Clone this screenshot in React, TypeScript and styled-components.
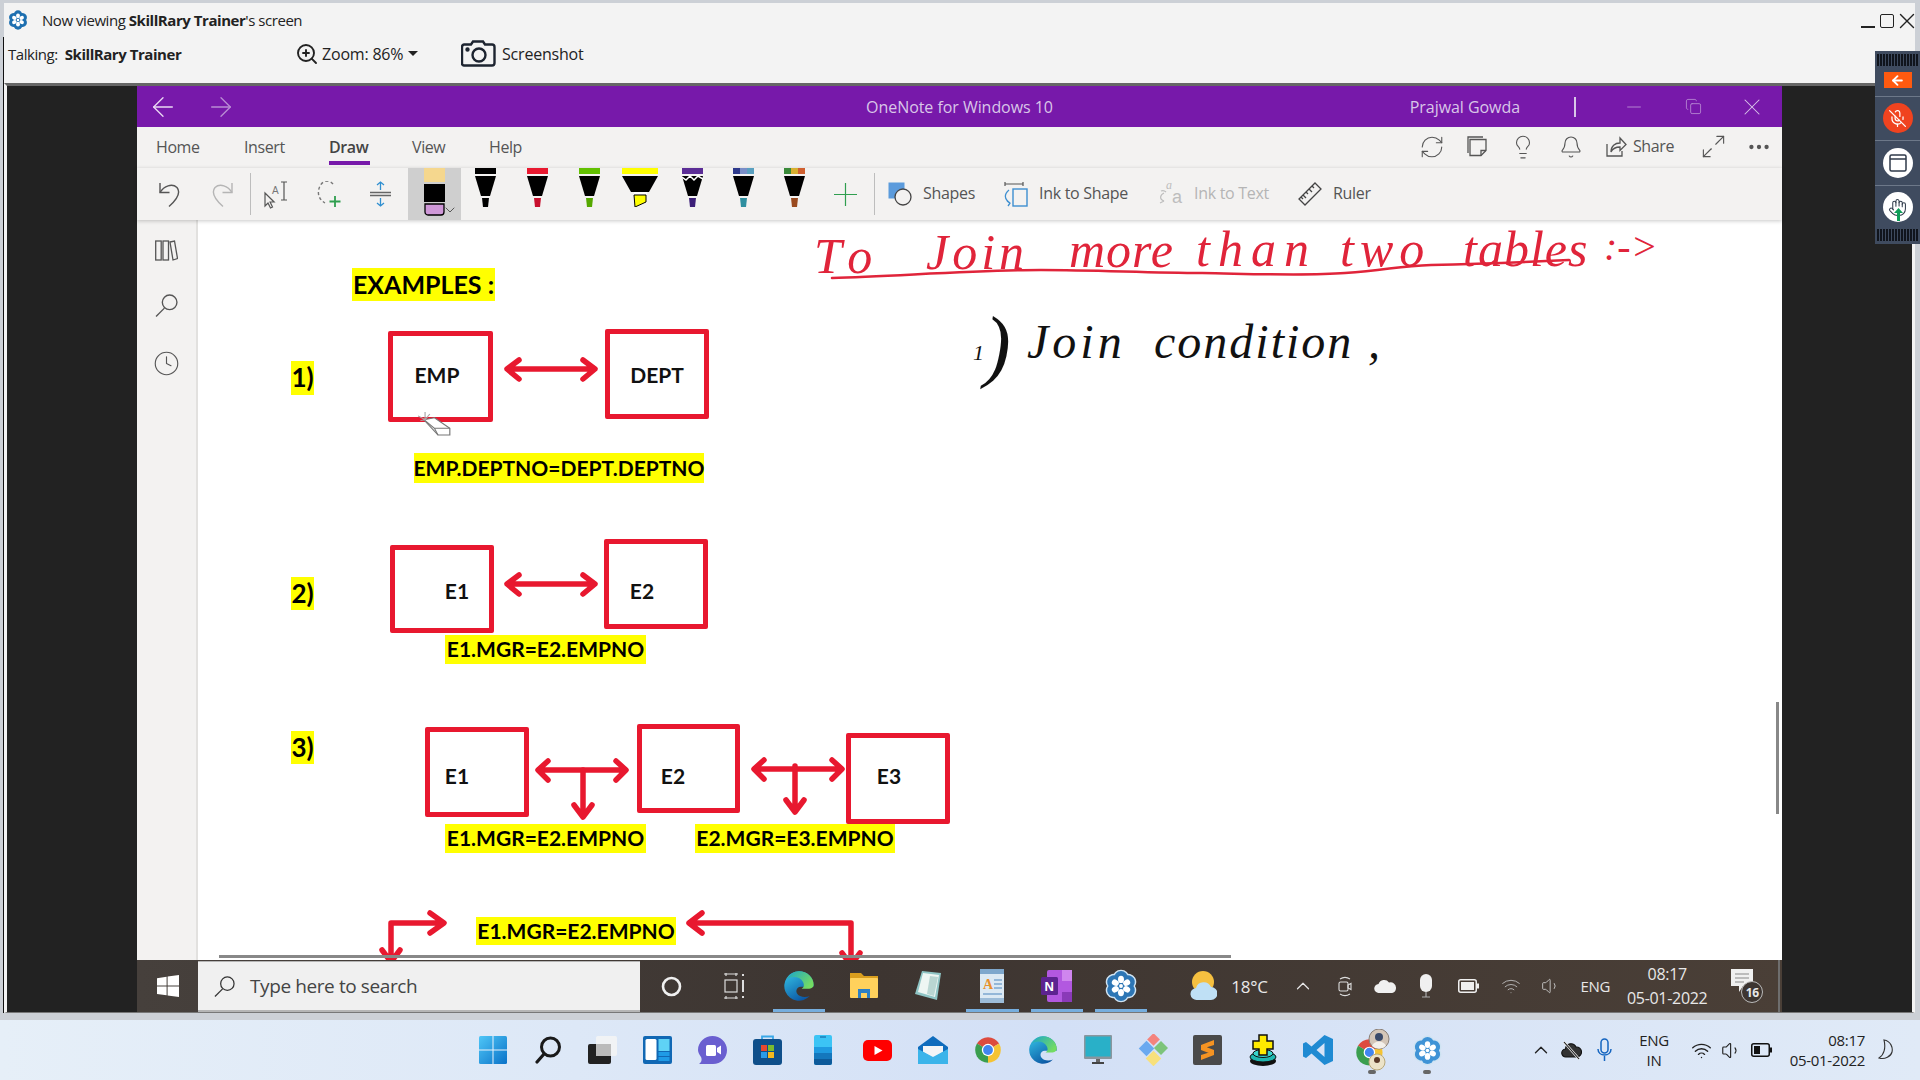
import styled, { createGlobalStyle } from "styled-components";
import {
  ArrowLeft, ArrowRight, Bell, ChevronDown, ChevronUp, Clock, Copy, Hand, Lightbulb,
  Maximize2, MicOff, Minus, MoreHorizontal, RefreshCw, Volume1, Wifi, X, ZoomIn,
} from "lucide-react";

const UI = `"Open Sans", "Noto Sans", sans-serif`;

const GlobalStyle = createGlobalStyle`
  html, body { margin: 0; padding: 0; width: 1920px; height: 1080px; overflow: hidden; }
  * { box-sizing: border-box; }
  body { font-family: ${UI}; }
`;

const Page = styled.div`
  position: relative;
  width: 1920px;
  height: 1080px;
  display: flex;
  flex-direction: column;
`;

const ShareFrame = styled.div`
  height: 1020px;
  background: #ccd0d6;
  padding: 3px 5px 0 4px;
  display: flex;
  flex-direction: column;
`;

const ViewerHeader = styled.header`
  height: 80px;
  flex: none;
  background: #f3f3f3;
  color: #222;
`;

const ViewerTitle = styled.div`
  height: 34px;
  display: flex;
  align-items: center;
  padding-left: 7px;
  gap: 13px;
  font-size: 15px;
  letter-spacing: -0.45px;
  margin-left: -4px;
  position: relative;
`;

const WindowButtons = styled.div`
  position: absolute;
  right: -5px;
  top: 5px;
  display: flex;
  align-items: center;
  color: #222;
`;

const MinBar = styled.div`
  width: 14px;
  height: 2px;
  background: #222;
  margin: 11px 5px 0 0;
`;

const MaxBox = styled.div`
  width: 14px;
  height: 14px;
  border: 1.5px solid #222;
  border-radius: 2px;
`;

const ViewerTools = styled.div`
  height: 46px;
  display: flex;
  align-items: center;
  box-shadow: -1px 0 0 #111;
  padding-left: 4px;
  padding-bottom: 13px;
`;

const Talking = styled.div`
  width: 287px;
  font-size: 15px;
  letter-spacing: -0.45px;
  b { margin-left: 7px; }
`;

const ZoomControl = styled.div`
  display: flex;
  align-items: center;
  gap: 3px;
  font-size: 16px;
  letter-spacing: -0.2px;
  width: 166px;
`;

const Caret = styled.span`
  width: 0;
  height: 0;
  border-left: 5px solid transparent;
  border-right: 5px solid transparent;
  border-top: 5px solid #222;
  margin-left: 2px;
`;

const ShotButton = styled.div`
  display: flex;
  align-items: center;
  gap: 6px;
  font-size: 16px;
  letter-spacing: -0.2px;
`;

const Stage = styled.main`
  height: 930px;
  flex: none;
  border-top: 3px solid #666;
  border-left: 3px solid #f3f3f3;
  border-right: 3px solid #f3f3f3;
  border-bottom: 1px solid #777;
  background: #222;
  padding-left: 130px;
  box-shadow: -1px 0 0 #111;
`;

const NoteWindow = styled.div`
  width: 1645px;
  height: 926px;
  display: flex;
  flex-direction: column;
`;

const TitleBar = styled.div`
  height: 41px;
  flex: none;
  background: #7719aa;
  color: #d9c6e8;
  display: grid;
  grid-template-columns: 1fr auto 1fr;
  align-items: center;
  font-size: 16px;
  letter-spacing: -0.05px;
`;

const NavArrows = styled.div`
  display: flex;
  align-items: center;
  gap: 26px;
  padding-left: 10px;
`;

const TitleRight = styled.div`
  display: flex;
  align-items: center;
  justify-content: flex-end;
  padding-right: 16px;
`;

const UserName = styled.span`
  margin-right: 54px;
`;

const TitleDivider = styled.span`
  width: 2px;
  height: 20px;
  background: #d9c6e8;
  margin-right: 47px;
`;

const TitleGlyph = styled.span<{ $ml?: number }>`
  display: flex;
  margin-left: ${(p) => p.$ml ?? 0}px;
`;

const TabRow = styled.div`
  height: 41px;
  flex: none;
  background: #f3f2f1;
  display: flex;
  align-items: center;
  padding: 0 13px 2px 19px;
  color: #555;
  font-size: 16px;
  letter-spacing: -0.4px;
`;

const Tab = styled.div<{ $w: number; $active?: boolean }>`
  position: relative;
  width: ${(p) => p.$w}px;
  font-weight: ${(p) => (p.$active ? 600 : 400)};
  color: ${(p) => (p.$active ? "#444" : "#555")};
  &::after {
    content: "";
    display: ${(p) => (p.$active ? "block" : "none")};
    position: absolute;
    left: 0;
    top: 25px;
    width: 41px;
    height: 4px;
    background: #7719aa;
  }
`;

const ToolRow = styled.div`
  height: 52px;
  flex: none;
  background: #f3f2f1;
  display: flex;
  align-items: center;
  color: #555;
  font-size: 16px;
  letter-spacing: -0.3px;
  position: relative;
  z-index: 2;
  box-shadow: 0 1px 4px rgba(0, 0, 0, 0.22);
`;

const ToolSlot = styled.div<{ $ml?: number; $w: number; $auto?: boolean; $top?: boolean }>`
  margin-left: ${(p) => (p.$auto ? "auto" : `${p.$ml ?? 0}px`)};
  width: ${(p) => p.$w}px;
  flex: none;
  display: flex;
  justify-content: center;
  align-self: ${(p) => (p.$top ? "flex-start" : "center")};
  svg { flex: none; }
`;

const ToolLabel = styled.span<{ $ml: number; $w: number; $off?: boolean }>`
  margin-left: ${(p) => p.$ml}px;
  width: ${(p) => p.$w}px;
  flex: none;
  white-space: nowrap;
  padding-bottom: 2px;
  color: ${(p) => (p.$off ? "#b5b5b5" : "#555")};
`;

const ToolDivider = styled.span<{ $ml: number }>`
  margin-left: ${(p) => p.$ml}px;
  width: 1px;
  height: 42px;
  background: #bdbdbd;
  flex: none;
`;

const ActivePen = styled.div`
  margin-left: 17px;
  width: 53px;
  height: 52px;
  flex: none;
  background: #cfcfcf;
  position: relative;
  padding-left: 16px;
`;

const ActiveChevron = styled.span`
  position: absolute;
  right: 3px;
  bottom: 2px;
  display: flex;
  color: #444;
`;

const NoteBody = styled.div`
  flex: 1;
  display: flex;
  min-height: 0;
`;

const SideRail = styled.nav`
  width: 61px;
  flex: none;
  background: #f3f2f1;
  border-right: 2px solid #e2e1df;
  display: flex;
  flex-direction: column;
  align-items: center;
  gap: 33px;
  padding-top: 20px;
  color: #555;
`;

const Canvas = styled.section`
  flex: 1;
  position: relative;
  overflow: hidden;
  background: #fff;
`;

const Highlight = styled.div<{ $x: number; $y: number; $w: number; $h: number; $size?: number }>`
  position: absolute;
  left: ${(p) => p.$x}px;
  top: ${(p) => p.$y}px;
  width: ${(p) => p.$w}px;
  height: ${(p) => p.$h}px;
  padding-bottom: 2px;
  background: #ffff00;
  color: #000;
  display: flex;
  align-items: center;
  justify-content: center;
  font: 700 ${(p) => p.$size ?? 21}px Lato, sans-serif;
  white-space: nowrap;
`;

const TableBox = styled.div<{ $x: number; $y: number; $w: number; $h: number }>`
  position: absolute;
  left: ${(p) => p.$x}px;
  top: ${(p) => p.$y}px;
  width: ${(p) => p.$w}px;
  height: ${(p) => p.$h}px;
  border: 5px solid #e8182f;
  border-radius: 2px;
`;

const TableName = styled.span<{ $cx: number; $cy: number }>`
  position: absolute;
  left: ${(p) => p.$cx}px;
  top: ${(p) => p.$cy}px;
  transform: translate(-50%, -50%);
  font: 700 21px Lato, sans-serif;
  color: #111;
`;

const DrawingLayer = styled.svg`
  position: absolute;
  left: 0;
  top: 0;
`;

const EraserCursor = styled.svg`
  position: absolute;
  left: 220px;
  top: 192px;
`;

const InkWord = styled.span<{ $x: number; $y: number; $ink: string; $size: number; $track?: number }>`
  position: absolute;
  left: ${(p) => p.$x}px;
  top: ${(p) => p.$y}px;
  line-height: 1;
  white-space: nowrap;
  color: ${(p) => p.$ink};
  font: italic 400 ${(p) => p.$size}px "Liberation Serif", serif;
  letter-spacing: ${(p) => p.$track ?? 0}px;
`;

const HScrollbar = styled.div`
  position: absolute;
  left: 21px;
  bottom: 2px;
  width: 1012px;
  height: 3px;
  background: #888;
`;

const VScrollbar = styled.div`
  position: absolute;
  right: 3px;
  top: 482px;
  width: 3px;
  height: 112px;
  background: #888;
`;

const InnerTaskbar = styled.div`
  height: 52px;
  flex: none;
  background: linear-gradient(90deg, #46403c 0%, #3d3531 45%, #4a3f37 100%);
  display: flex;
  align-items: center;
  color: #e8e8e8;
  font-size: 15px;
  letter-spacing: -0.3px;
`;

const WinSlot = styled.div`
  width: 61px;
  display: flex;
  justify-content: center;
`;

const SearchBox = styled.div`
  width: 442px;
  height: 51px;
  margin-top: 1px;
  background: #f0f0f0;
  border-top: 1px solid #b5b5b5;
  border-bottom: 2px solid #b5b5b5;
  display: flex;
  align-items: center;
  padding-left: 16px;
  gap: 15px;
  color: #444;
  font-size: 19px;
  letter-spacing: -0.4px;
`;

const BarSlot = styled.div<{ $w: number; $active?: boolean }>`
  position: relative;
  width: ${(p) => p.$w}px;
  height: 52px;
  flex: none;
  display: flex;
  align-items: center;
  justify-content: center;
  &::after {
    content: "";
    display: ${(p) => (p.$active ? "block" : "none")};
    position: absolute;
    left: 6px;
    right: 6px;
    bottom: 0;
    height: 3px;
    background: #76aede;
  }
`;

const BarGlyph = styled.span<{ $ml: number; $fs?: number }>`
  display: flex;
  justify-content: center;
  flex: none;
  margin-left: ${(p) => p.$ml}px;
  font-size: ${(p) => p.$fs ?? 15}px;
  white-space: nowrap;
`;

const BarClock = styled.div`
  margin-left: 17px;
  width: 80px;
  flex: none;
  display: flex;
  flex-direction: column;
  align-items: center;
  gap: 4px;
  line-height: 20px;
  font-size: 16px;
  white-space: nowrap;
`;

const NotifyWrap = styled.div`
  position: relative;
  margin-left: 24px;
  width: 32px;
  height: 34px;
  flex: none;
`;

const NotifyBadge = styled.span`
  position: absolute;
  right: 0;
  bottom: 0;
  width: 22px;
  height: 22px;
  border-radius: 50%;
  background: #3d3531;
  border: 1px solid #bbb;
  display: flex;
  align-items: center;
  justify-content: center;
  font-size: 12px;
  font-weight: 700;
  letter-spacing: -0.5px;
`;

const BarDivider = styled.span`
  margin-left: 15px;
  width: 2px;
  height: 52px;
  background: #6e6e6e;
`;

const DesktopBar = styled.footer`
  height: 60px;
  background: linear-gradient(90deg, #e6eff8 0%, #dde8f7 30%, #d3e0f6 55%, #e0eaf7 100%);
  display: flex;
  align-items: center;
  padding-left: 465px;
  color: #222;
`;

const DockSlot = styled.div<{ $dot?: boolean }>`
  position: relative;
  width: 55px;
  height: 60px;
  flex: none;
  display: flex;
  align-items: center;
  justify-content: center;
  &::after {
    content: "";
    display: ${(p) => (p.$dot ? "block" : "none")};
    position: absolute;
    left: 23px;
    top: 50px;
    width: 8px;
    height: 4px;
    border-radius: 2px;
    background: #666;
  }
`;

const TraySlot = styled.div<{ $w: number; $ml?: number }>`
  width: ${(p) => p.$w}px;
  margin-left: ${(p) => p.$ml ?? 0}px;
  flex: none;
  display: flex;
  flex-direction: column;
  align-items: center;
  font-size: 15px;
  line-height: 20px;
  letter-spacing: -0.3px;
`;

const TrayClock = styled.div`
  width: 89px;
  flex: none;
  text-align: right;
  font-size: 15px;
  line-height: 20px;
  letter-spacing: -0.3px;
  white-space: nowrap;
`;

const FloatBar = styled.aside`
  position: absolute;
  top: 51px;
  right: 0;
  width: 45px;
  height: 193px;
  background: #3f4b5f;
  display: flex;
  flex-direction: column;
  align-items: center;
  padding: 3px 0;
`;

const Grip = styled.div<{ $end?: boolean }>`
  width: 41px;
  height: 12px;
  flex: none;
  margin-top: ${(p) => (p.$end ? "auto" : "0")};
  background: repeating-linear-gradient(90deg, #10141c 0 2px, transparent 2px 3px);
`;

const ExitButton = styled.div`
  margin-top: 6px;
  width: 28px;
  height: 16px;
  background: #ff5a0f;
  display: flex;
  align-items: center;
  justify-content: center;
  color: #fff;
`;

const FloatSep = styled.div<{ $mt: number }>`
  width: 100%;
  height: 1px;
  background: #6d7889;
  margin-top: ${(p) => p.$mt}px;
`;

const RoundButton = styled.div<{ $bg: string; $mt: number; $ink: string }>`
  position: relative;
  margin-top: ${(p) => p.$mt}px;
  width: 30px;
  height: 30px;
  border-radius: 50%;
  background: ${(p) => p.$bg};
  color: ${(p) => p.$ink};
  flex: none;
  display: flex;
  align-items: center;
  justify-content: center;
`;

const RaiseArrow = styled.svg`
  position: absolute;
  left: 11px;
  bottom: 1px;
`;

/* ---------- drawn icons ---------- */

const Pen = ({ bands, tip = "#000", stripe }: { bands: string[]; tip?: string; stripe?: boolean }) => (
  <svg width="21" height="39" viewBox="0 0 21 39">
    {bands.map((c, i) => (
      <rect key={c} x={(21 / bands.length) * i} y="0" width={21 / bands.length + 0.3} height="6" fill={c} />
    ))}
    <polygon points="0,8 21,8 15,28 6,28" fill="#000" />
    {stripe && <polyline points="0,9 4,12 8,8 12,12 16,8 21,11" fill="none" stroke="#fff" strokeWidth="1.5" />}
    <polygon points="7,30 14,30 13,39 8,39" fill={tip} />
  </svg>
);

const Highlighter = () => (
  <svg width="36" height="39" viewBox="0 0 36 39">
    <rect x="0" y="0" width="36" height="6" fill="#ffff00" />
    <polygon points="0,8 36,8 27,24 9,24" fill="#000" />
    <rect x="12" y="24" width="13" height="2" fill="#fff" />
    <polygon points="12,27 24,27 24,34 13,39" fill="#ffff00" stroke="#000" strokeWidth="1" />
  </svg>
);

const PenSwatch = () => (
  <svg width="22" height="48" viewBox="0 0 22 48">
    <rect x="0" y="0" width="21" height="14" fill="#f5d78e" />
    <rect x="0" y="16" width="21" height="18" fill="#000" />
    <path d="M1 36h19v8a3 3 0 0 1-3 3H4a3 3 0 0 1-3-3z" fill="#cf98d8" stroke="#000" strokeWidth="1.3" />
  </svg>
);

const UndoIcon = ({ color, flip }: { color: string; flip?: boolean }) => (
  <svg width="23" height="28" viewBox="0 0 23 28" fill="none" stroke={color} strokeWidth="1.4" transform={flip ? "scale(-1 1)" : undefined}>
    <path d="M2 3v9.500h9.500" />
    <path d="M2 12.500C6 6 14 3 19 7.500c4 5 1 11-8 19" />
  </svg>
);

const SelectIcon = () => (
  <svg width="24" height="30" viewBox="0 0 24 30" fill="none" stroke="#555" strokeWidth="1.2">
    <path d="M1 14v13l3-3 2.500 5 2-1-2.400-5h4z" />
    <path d="M17 3h6M20 3v18M17 21h6" />
    <text x="8" y="15" fontSize="10" fill="#777" stroke="none" fontFamily="Liberation Sans, sans-serif">A</text>
  </svg>
);

const LassoIcon = () => (
  <svg width="25" height="27" viewBox="0 0 25 27" fill="none">
    <path d="M16 3a8 9 0 0 0-13 2c-3 6-2 13 5 17" stroke="#777" strokeWidth="1.4" strokeDasharray="3 2.5" />
    <path d="M18 15v11M12.500 20.500h11" stroke="#2f9e4f" strokeWidth="1.8" />
  </svg>
);

const SpaceIcon = () => (
  <svg width="21" height="26" viewBox="0 0 21 26" fill="none">
    <path d="M10.500 1v8M7 4l3.500-3 3.500 3M10.500 25v-8M7 22l3.500 3 3.500-3" stroke="#2f8fd0" strokeWidth="1.3" />
    <path d="M0 11.500h21M0 14.500h21" stroke="#666" strokeWidth="1.3" />
  </svg>
);

const AddPenIcon = () => (
  <svg width="23" height="23" viewBox="0 0 23 23" fill="none" stroke="#2f9e4f" strokeWidth="1.2">
    <path d="M11.500 0v23M0 11.500h23" />
  </svg>
);

const ShapesIcon = () => (
  <svg width="24" height="24" viewBox="0 0 24 24" fill="none">
    <rect x="0.500" y="0.500" width="16" height="16" fill="#5b9bdc" />
    <circle cx="15" cy="15" r="8" fill="#f3f2f1" stroke="#444" strokeWidth="1.3" />
  </svg>
);

const InkShapeIcon = () => (
  <svg width="24" height="26" viewBox="0 0 24 26" fill="none">
    <path d="M1 1v4M1 3h18M19 1v4" stroke="#555" strokeWidth="1.2" />
    <rect x="9" y="8" width="14" height="17" stroke="#3d8fd0" strokeWidth="1.4" fill="#f3f2f1" />
    <path d="M5 9c-5 4-5 9 1 13M3 20l3 2.200L4 25" stroke="#3d8fd0" strokeWidth="1.3" />
  </svg>
);

const InkTextIcon = () => (
  <svg width="25" height="30" viewBox="0 0 25 30" fill="none" stroke="#bdbdbd" strokeWidth="1.2">
    <path d="M5 14C1 16 0 20 5 22M1 24l4-2M2 12c2-1 4 0 5 1" />
    <text x="7" y="10" fontSize="12" fontStyle="italic" fill="#bdbdbd" stroke="none" fontFamily="Liberation Serif, serif">a</text>
    <text x="13" y="24" fontSize="18" fill="#bdbdbd" stroke="none" fontFamily="Liberation Sans, sans-serif">a</text>
  </svg>
);

const RulerIcon = () => (
  <svg width="24" height="24" viewBox="0 0 24 24" fill="none" stroke="#444" strokeWidth="1.3">
    <path d="M17 1l6 6L7 23l-6-6z" />
    <path d="M14 4l2 2M11 7l3 3M8 10l2 2M5 13l3 3M3 15l2 2" />
  </svg>
);

const NoteIcon = () => (
  <svg width="20" height="21" viewBox="0 0 20 21" fill="none" stroke="#555" strokeWidth="1.3">
    <path d="M3 3.500h16v11l-5 5H3z" />
    <path d="M1 17V1h15M19 14.500h-5v5" />
  </svg>
);

const ShareIcon = () => (
  <svg width="21" height="21" viewBox="0 0 21 21" fill="none" stroke="#555" strokeWidth="1.3">
    <path d="M1 8v12h15v-5" />
    <path d="M5 16c0-6 4-9 9-9V2l6 6.500-6 6V11c-4 0-7 1-9 5z" />
  </svg>
);

const BooksIcon = () => (
  <svg width="23" height="21" viewBox="0 0 23 21" fill="none" stroke="#555" strokeWidth="1.3">
    <rect x="0.700" y="1" width="5.500" height="19" />
    <rect x="8" y="1" width="5.500" height="19" />
    <path d="M15 2 19.500 1 22.500 18.500 18 20z" />
  </svg>
);

const LensIcon = ({ size, color }: { size: number; color: string }) => (
  <svg width={size} height={size} viewBox="0 0 22 22" fill="none" stroke={color} strokeWidth="1.300">
    <circle cx="14" cy="8" r="7" />
    <path d="M9 13.500 1 21.500" />
  </svg>
);

const CameraIcon = () => (
  <svg width="35" height="27" viewBox="0 0 35 27" fill="none" stroke="#1d2430" strokeWidth="2.4">
    <path d="M3 4.500h7l2-3h10l2 3h7a2.500 2.500 0 0 1 2.500 2.500v16a2.500 2.500 0 0 1-2.500 2.500H3A2 2 0 0 1 1 23.500V7a2.500 2.500 0 0 1 2-2.500z" />
    <circle cx="18" cy="15" r="6.500" />
    <circle cx="6.500" cy="9.500" r="1" fill="#1d2430" />
  </svg>
);

const FlowerLogo = ({ size, halo = "#fff", core = "#1d6fb0", rim }: { size: number; halo?: string; core?: string; rim?: string }) => {
  const petals = [0, 60, 120, 180, 240, 300];
  return (
    <svg width={size} height={size} viewBox="-1 -1 26 26">
      {rim && petals.map((a) => (
        <circle key={a} cx="12" cy="5.800" r="6.300" fill={rim} transform={`rotate(${a} 12 12)`} />
      ))}
      {petals.map((a) => (
        <circle key={a} cx="12" cy="5.800" r="5.200" fill={core} transform={`rotate(${a} 12 12)`} />
      ))}
      <circle cx="12" cy="12" r="7" fill={core} />
      {petals.map((a) => (
        <ellipse key={a} cx="12" cy="7" rx="2.300" ry="2.800" fill={halo} transform={`rotate(${a} 12 12)`} />
      ))}
      <circle cx="12" cy="12" r="1.500" fill={halo} />
    </svg>
  );
};

const WinTenIcon = () => (
  <svg width="22" height="22" viewBox="0 0 22 22" fill="#fff">
    <path d="M0 3.200 9.600 1.800v8.700H0zM10.600 1.600 22 0v10.500H10.600zM0 11.500h9.600v8.800L0 19zM10.600 11.500H22V22l-11.400-1.600z" />
  </svg>
);

const WinElevenIcon = () => (
  <svg width="28" height="28" viewBox="0 0 28 28">
    <defs>
      <linearGradient id="win11" x1="0" y1="0" x2="1" y2="1">
        <stop offset="0" stopColor="#4fc6f7" />
        <stop offset="1" stopColor="#0a72c8" />
      </linearGradient>
    </defs>
    <rect width="28" height="28" rx="1.500" fill="url(#win11)" />
    <path d="M14 0v28M0 14h28" stroke="#eaf2fb" strokeWidth="1" />
  </svg>
);

const GlassIcon = () => (
  <svg width="26" height="28" viewBox="0 0 26 28" fill="none">
    <circle cx="15.500" cy="11" r="9" stroke="#1a1a1a" strokeWidth="3" />
    <path d="M9 18 2 26" stroke="#1a1a1a" strokeWidth="3.200" strokeLinecap="round" />
  </svg>
);

const TaskViewIcon = () => (
  <svg width="29" height="28" viewBox="0 0 29 28">
    <rect x="0" y="8" width="23" height="20" rx="2" fill="#222" />
    <rect x="8" y="0" width="21" height="20" rx="2" fill="#f5f5f5" fillOpacity="0.850" />
    <rect x="8" y="8" width="15" height="12" fill="#bbb" />
  </svg>
);

const WidgetsIcon = () => (
  <svg width="29" height="28" viewBox="0 0 29 28">
    <rect width="29" height="28" rx="2" fill="#1168b4" />
    <rect x="2.500" y="3" width="11" height="21" rx="1.500" fill="#fff" />
    <rect x="15.500" y="3" width="11" height="12" fill="#5fd2f5" />
    <rect x="15.500" y="16" width="11" height="4" fill="#1f9be6" />
    <rect x="15.500" y="21" width="11" height="4" fill="#1f9be6" />
  </svg>
);

const ChatIcon = () => (
  <svg width="29" height="29" viewBox="0 0 29 29">
    <path d="M14.500 0C22 0 29 6 29 14c0 8-6 14-14 14H1c3-2 3-5 2-7C1 18 0 16 0 14 0 6 7 0 14.500 0z" fill="#6a5fd0" />
    <rect x="8" y="9" width="10" height="11" rx="1.500" fill="#fff" />
    <path d="M19 12l4-2.500v9L19 16z" fill="#fff" />
  </svg>
);

const StoreIcon = () => (
  <svg width="29" height="30" viewBox="0 0 29 30">
    <path d="M9 4V1.500h11V4" fill="none" stroke="#3aa8e8" strokeWidth="1.800" />
    <rect x="0" y="4" width="29" height="26" rx="3" fill="#0f4f8a" />
    <rect x="8" y="10" width="6" height="6" fill="#e8492f" />
    <rect x="15" y="10" width="6" height="6" fill="#7bbb2f" />
    <rect x="8" y="17" width="6" height="6" fill="#2a9be8" />
    <rect x="15" y="17" width="6" height="6" fill="#f5b81e" />
  </svg>
);

const PhoneIcon = () => (
  <svg width="18" height="30" viewBox="0 0 18 30">
    <rect width="18" height="30" rx="2" fill="#3cc4f5" />
    <rect y="12" width="18" height="6" fill="#1f9ae0" />
    <rect y="18" width="18" height="6" fill="#1477bd" />
    <path d="M0 24h18v4a2 2 0 0 1-2 2H2a2 2 0 0 1-2-2z" fill="#0d5a9a" />
    <rect x="6" y="1.500" width="6" height="1" fill="#0d5a9a" />
  </svg>
);

const TubeIcon = () => (
  <svg width="29" height="21" viewBox="0 0 29 21">
    <rect width="29" height="21" rx="5" fill="#f00" />
    <path d="M11.500 6l8 4.500-8 4.500z" fill="#fff" />
  </svg>
);

const MailIcon = () => (
  <svg width="30" height="28" viewBox="0 0 30 28">
    <path d="M15 0 30 11v17H0V11z" fill="#0f6cbd" />
    <path d="M5 10h20v6l-10 6-10-6z" fill="#f3f5f7" />
    <path d="M0 13l15 8 15-8v15H0z" fill="#3bb4ea" />
  </svg>
);

const ChromeIcon = ({ size = 28 }: { size?: number }) => (
  <svg width={size} height={size} viewBox="0 0 24 24">
    <path d="M12 12 2.500 6.500A11 11 0 0 1 21.500 6.500z" fill="#dd4b3e" />
    <path d="M12 12 21.500 6.500A11 11 0 0 1 12 23z" fill="#f5c333" />
    <path d="M12 12 12 23A11 11 0 0 1 2.500 6.500z" fill="#3a9e4f" />
    <circle cx="12" cy="12" r="5.300" fill="#fff" />
    <circle cx="12" cy="12" r="4.200" fill="#4286f0" />
  </svg>
);

const EdgeIcon = ({ size }: { size: number }) => (
  <svg width={size} height={size} viewBox="0 0 24 24">
    <defs>
      <linearGradient id="edgeBody" x1="0" y1="0" x2="0.600" y2="1">
        <stop offset="0" stopColor="#36c6e8" />
        <stop offset="1" stopColor="#0b57a4" />
      </linearGradient>
      <linearGradient id="edgeCap" x1="0" y1="0" x2="1" y2="0.600">
        <stop offset="0" stopColor="#1aa5c9" />
        <stop offset="1" stopColor="#74dc62" />
      </linearGradient>
    </defs>
    <path d="M12 1a11 11 0 1 0 8 18.500c-3 1.500-8 1-9.600-2-1.200-2.500.5-5 3-5h9.500C23.500 6 18.500 1 12 1z" fill="url(#edgeBody)" />
    <path d="M12 1c6 0 11 4.500 11 10 0 2-2 3-4 3h-5c2-1 2-3 1-5-2-4-8-5-12-2C5 3.500 8 1 12 1z" fill="url(#edgeCap)" />
  </svg>
);

const FolderIcon = () => (
  <svg width="28" height="30" viewBox="0 0 28 30">
    <path d="M0 2h11l3 3h14v6H0z" fill="#d99e1e" />
    <rect y="7" width="28" height="20" rx="1" fill="#ffd15c" />
    <path d="M8 27v-9h12v9h-3v-5h-6v5z" fill="#2b7fc4" />
  </svg>
);

const NotepadIcon = () => (
  <svg width="28" height="32" viewBox="0 0 28 32">
    <path d="M8 1 27 3 23 30 1 24z" fill="#8fc5c5" />
    <path d="M9 3 25 5 21 27 4 22z" fill="#eef6f3" />
    <path d="M16 6 24 7 20 26 13 24z" fill="#b9d6d2" />
  </svg>
);

const WordpadIcon = () => (
  <svg width="26" height="36" viewBox="0 0 26 36">
    <rect x="1" y="1" width="24" height="34" rx="2" fill="#dce9f3" />
    <rect x="1" y="1" width="24" height="5" fill="#7ea7cc" />
    <rect x="1" y="30" width="24" height="5" fill="#9dbcd8" />
    <text x="4" y="21" fontSize="14" fontWeight="700" fill="#e8912b" fontFamily="Liberation Serif, serif">A</text>
    <path d="M15 12h8M15 16h8M15 20h8M4 26h19" stroke="#4d86bd" strokeWidth="1.200" />
  </svg>
);

const OneNoteIcon = () => (
  <svg width="31" height="32" viewBox="0 0 31 32">
    <rect x="6" y="0" width="25" height="32" rx="2" fill="#b258e0" />
    <rect x="21" y="0" width="10" height="11" fill="#cf86ee" />
    <rect x="21" y="22" width="10" height="10" fill="#8a3ab8" />
    <rect x="0" y="7" width="17" height="18" rx="1.500" fill="#5c2390" />
    <text x="3.500" y="21" fontSize="13" fontWeight="700" fill="#fff" fontFamily="Liberation Sans, sans-serif">N</text>
  </svg>
);

const WeatherIcon = () => (
  <svg width="27" height="30" viewBox="0 0 27 30">
    <circle cx="13" cy="11" r="11" fill="#f5c040" />
    <path d="M7 29a6 6 0 0 1-1-12 8 8 0 0 1 15-1 6.500 6.500 0 0 1 0 13z" fill="#bfe0f5" />
  </svg>
);

const MeetIcon = () => (
  <svg width="14" height="22" viewBox="0 0 14 22" fill="none" stroke="#ddd" strokeWidth="1.100">
    <rect x="1" y="7" width="9" height="9" rx="1.500" />
    <path d="M10 10l3-1.500v6L10 13zM2 4c3-2 7-2 10 0M2 19c3 2 7 2 10 0" />
  </svg>
);

const CloudIcon = () => (
  <svg width="22" height="14" viewBox="0 0 22 14" fill="#f0f0f0">
    <path d="M5 14a4.500 4.500 0 0 1-.5-9A6 6 0 0 1 15 3.500 5.500 5.500 0 0 1 22 9c0 3-2 5-5 5z" />
  </svg>
);

const MicPill = () => (
  <svg width="14" height="24" viewBox="0 0 14 24" fill="none">
    <rect x="1" y="0" width="12" height="18" rx="6" fill="#f0f0f0" />
    <path d="M7 18v5M3 23h8" stroke="#aaa" strokeWidth="1.200" />
  </svg>
);

const BatteryIcon = ({ color, level }: { color: string; level: number }) => (
  <svg width="21" height="14" viewBox="0 0 21 14" fill="none">
    <rect x="0.750" y="0.750" width="17.500" height="12.500" rx="2" stroke={color} strokeWidth="1.500" />
    <rect x="3" y="3" width={level} height="8" fill={color} />
    <rect x="19" y="4.500" width="2" height="5" fill={color} />
  </svg>
);

const ChatBubble = () => (
  <svg width="22" height="24" viewBox="0 0 22 24">
    <path d="M0 0h22v17H12l-4 6v-6H0z" fill="#f0f0f0" />
    <path d="M4 5h14M4 9h14M4 13h9" stroke="#888" strokeWidth="1.200" />
  </svg>
);

const CortanaIcon = () => (
  <svg width="21" height="21" viewBox="0 0 21 21" fill="none">
    <circle cx="10.500" cy="10.500" r="8.500" stroke="#f0f0f0" strokeWidth="2.600" />
  </svg>
);

const TimelineIcon = () => (
  <svg width="21" height="26" viewBox="0 0 21 26" fill="none" stroke="#ddd" strokeWidth="1.200">
    <path d="M0 1h14M2 0v3M12 0v3M0 25h14M2 23v3M12 23v3" />
    <rect x="1" y="7" width="12" height="12" />
    <path d="M19 1v2M19 7v12M19 23v2" strokeWidth="2" />
  </svg>
);

const MonitorIcon = () => (
  <svg width="28" height="30" viewBox="0 0 28 30">
    <rect width="28" height="24" rx="1" fill="#8a969e" />
    <rect x="1.500" y="1.500" width="25" height="20" fill="#29b0c8" />
    <rect x="12" y="24" width="4" height="3" fill="#666" />
    <rect x="8" y="27" width="12" height="2" fill="#444" />
  </svg>
);

const GitDiamondsIcon = () => (
  <svg width="30" height="32" viewBox="0 0 30 32">
    <rect x="11" y="1" width="9" height="9" transform="rotate(45 15.500 5.500)" fill="#f4837d" />
    <rect x="3" y="9" width="11" height="11" transform="rotate(45 8.500 14.500)" fill="#6aa9f0" />
    <rect x="18" y="9" width="10" height="10" transform="rotate(45 23 14)" fill="#7dc47a" />
    <rect x="10" y="19" width="11" height="11" transform="rotate(45 15.500 24.500)" fill="#f7e07c" />
  </svg>
);

const SublimeIcon = () => (
  <svg width="29" height="30" viewBox="0 0 29 30">
    <rect width="29" height="30" rx="2" fill="#4a4a4a" />
    <path d="M21 5 8 10v5l13 5v-5L13 12.500 21 10zM8 25l13-5v-5L8 10v5l8 2.500L8 20z" fill="#f59322" />
  </svg>
);

const CrossIcon = () => (
  <svg width="28" height="32" viewBox="0 0 28 32">
    <ellipse cx="14" cy="27" rx="13" ry="5" fill="#111" />
    <ellipse cx="14" cy="23" rx="13" ry="5" fill="#1fb7b0" stroke="#111" />
    <ellipse cx="14" cy="19.500" rx="10" ry="4" fill="#39d5cc" stroke="#111" />
    <path d="M10 1h8v6h6v8h-6v6h-8v-6H4V7h6z" fill="#ffea00" stroke="#111" strokeWidth="1.500" />
  </svg>
);

const CodeIcon = () => (
  <svg width="30" height="30" viewBox="0 0 30 30">
    <path d="M21.500 0 30 4v22l-8.500 4L8.500 18.500 3 23l-3-1.500v-13L3 7l5.500 4.500zM21.500 8l-8 7 8 7z" fill="#1f8ad2" fillRule="evenodd" />
  </svg>
);

const ProfileChromeIcon = () => (
  <svg width="35" height="42" viewBox="0 0 35 42">
    <g transform="translate(0 9) scale(1.200)">
      <path d="M12 12 2.500 6.500A11 11 0 0 1 21.500 6.500z" fill="#dd4b3e" />
      <path d="M12 12 21.500 6.500A11 11 0 0 1 12 23z" fill="#f5c333" />
      <path d="M12 12 12 23A11 11 0 0 1 2.500 6.500z" fill="#3a9e4f" />
      <circle cx="12" cy="12" r="4.300" fill="#4286f0" stroke="#fff" />
    </g>
    <circle cx="24" cy="10" r="10" fill="#d4c6b8" stroke="#8a7f76" />
    <circle cx="24" cy="8" r="4" fill="#3a4a6a" />
    <path d="M17 17c2-6 12-6 14 0a10 10 0 0 1-14 0z" fill="#f4f0ea" />
    <circle cx="22" cy="33" r="8" fill="#ece3c8" stroke="#b8a878" />
    <circle cx="22" cy="31" r="3" fill="#5a3a2a" />
  </svg>
);

const CloudOffIcon = () => (
  <svg width="21" height="19" viewBox="0 0 21 19" fill="#333" stroke="#111" strokeWidth="1.100">
    <path d="M5 16a4 4 0 0 1-.5-8A5.500 5.500 0 0 1 15 6a4.800 4.800 0 0 1 1 10z" />
    <path d="M3 1l15 17" stroke="#eee" strokeWidth="2.600" />
    <path d="M3 1l15 17" />
  </svg>
);

const BlueMicIcon = () => (
  <svg width="15" height="24" viewBox="0 0 15 24" fill="none" stroke="#1565c0" strokeWidth="1.500">
    <rect x="4" y="1" width="7" height="14" rx="3.500" />
    <path d="M1 11c0 8 13 8 13 0M7.500 18v5" />
  </svg>
);

const MoonIcon = () => (
  <svg width="16" height="22" viewBox="0 0 16 22" fill="none" stroke="#333" strokeWidth="1.100">
    <path d="M6 1c7 1 9 8 8 12-1 4-7 8-13 6 5-3 7-10 5-18z" />
  </svg>
);

const RedStroke = ({ d }: { d: string }) => (
  <path d={d} fill="none" stroke="#e8182f" strokeWidth="5.500" strokeLinecap="round" strokeLinejoin="round" />
);

/* ---------- page ---------- */

const RED_INK = "#e0243a";

export default function App() {
  return (
    <Page>
      <GlobalStyle />
      <ShareFrame>
        <ViewerHeader>
          <ViewerTitle>
            <FlowerLogo size={22} />
            <span>
              Now viewing <b>SkillRary Trainer</b>'s screen
            </span>
            <WindowButtons>
              <MinBar />
              <MaxBox />
              <X size={26} strokeWidth={1.3} />
            </WindowButtons>
          </ViewerTitle>
          <ViewerTools>
            <Talking>
              Talking:<b>SkillRary Trainer</b>
            </Talking>
            <ZoomControl>
              <ZoomIn size={24} strokeWidth={1.9} />
              Zoom: 86%
              <Caret />
            </ZoomControl>
            <ShotButton>
              <CameraIcon />
              Screenshot
            </ShotButton>
          </ViewerTools>
        </ViewerHeader>

        <Stage>
          <NoteWindow>
            <TitleBar>
              <NavArrows>
                <ArrowLeft size={32} strokeWidth={1} color="#ead9f3" />
                <ArrowRight size={32} strokeWidth={1} color="#b98dd4" />
              </NavArrows>
              <span>OneNote for Windows 10</span>
              <TitleRight>
                <UserName>Prajwal Gowda</UserName>
                <TitleDivider />
                <TitleGlyph>
                  <Minus size={22} strokeWidth={1} color="#b98dd4" />
                </TitleGlyph>
                <TitleGlyph $ml={40}>
                  <Copy size={17} strokeWidth={1.2} color="#b98dd4" />
                </TitleGlyph>
                <TitleGlyph $ml={36}>
                  <X size={28} strokeWidth={0.9} color="#d9c6e8" />
                </TitleGlyph>
              </TitleRight>
            </TitleBar>

            <TabRow>
              <Tab $w={88}>Home</Tab>
              <Tab $w={85}>Insert</Tab>
              <Tab $w={83} $active>
                Draw
              </Tab>
              <Tab $w={77}>View</Tab>
              <Tab $w={40}>Help</Tab>
              <ToolSlot $auto $w={21}>
                <RefreshCw size={26} strokeWidth={1} />
              </ToolSlot>
              <ToolSlot $ml={25} $w={20}>
                <NoteIcon />
              </ToolSlot>
              <ToolSlot $ml={28} $w={16}>
                <Lightbulb size={26} strokeWidth={1} />
              </ToolSlot>
              <ToolSlot $ml={30} $w={19}>
                <Bell size={24} strokeWidth={1.1} />
              </ToolSlot>
              <ToolSlot $ml={26} $w={20}>
                <ShareIcon />
              </ToolSlot>
              <ToolLabel $ml={7} $w={42}>
                Share
              </ToolLabel>
              <ToolSlot $ml={29} $w={19}>
                <Maximize2 size={27} strokeWidth={1} />
              </ToolSlot>
              <ToolSlot $ml={25} $w={21}>
                <MoreHorizontal size={26} strokeWidth={2} />
              </ToolSlot>
            </TabRow>

            <ToolRow>
              <ToolSlot $ml={21} $w={23}>
                <UndoIcon color="#555" />
              </ToolSlot>
              <ToolSlot $ml={31} $w={21}>
                <UndoIcon color="#b5b5b5" flip />
              </ToolSlot>
              <ToolDivider $ml={17} />
              <ToolSlot $ml={13} $w={24}>
                <SelectIcon />
              </ToolSlot>
              <ToolSlot $ml={29} $w={25}>
                <LassoIcon />
              </ToolSlot>
              <ToolSlot $ml={28} $w={21}>
                <SpaceIcon />
              </ToolSlot>
              <ActivePen>
                <PenSwatch />
                <ActiveChevron>
                  <ChevronDown size={16} strokeWidth={1.3} />
                </ActiveChevron>
              </ActivePen>
              <ToolSlot $ml={14} $w={21} $top>
                <Pen bands={["#000"]} />
              </ToolSlot>
              <ToolSlot $ml={31} $w={21} $top>
                <Pen bands={["#e8182f"]} tip="#c8102e" />
              </ToolSlot>
              <ToolSlot $ml={31} $w={21} $top>
                <Pen bands={["#62c000"]} tip="#55a800" />
              </ToolSlot>
              <ToolSlot $ml={22} $w={36} $top>
                <Highlighter />
              </ToolSlot>
              <ToolSlot $ml={24} $w={21} $top>
                <Pen bands={["#5b2d96"]} tip="#3c1f78" stripe />
              </ToolSlot>
              <ToolSlot $ml={30} $w={21} $top>
                <Pen bands={["#2e3a8c", "#7a8ec8", "#5aa0c0"]} tip="#2f8fa0" />
              </ToolSlot>
              <ToolSlot $ml={30} $w={21} $top>
                <Pen bands={["#3a8a3a", "#d8b030", "#d06030"]} tip="#9a4a1f" />
              </ToolSlot>
              <ToolSlot $ml={29} $w={23}>
                <AddPenIcon />
              </ToolSlot>
              <ToolDivider $ml={17} />
              <ToolSlot $ml={13} $w={24}>
                <ShapesIcon />
              </ToolSlot>
              <ToolLabel $ml={11} $w={53}>
                Shapes
              </ToolLabel>
              <ToolSlot $ml={28} $w={24}>
                <InkShapeIcon />
              </ToolSlot>
              <ToolLabel $ml={11} $w={92}>
                Ink to Shape
              </ToolLabel>
              <ToolSlot $ml={28} $w={25}>
                <InkTextIcon />
              </ToolSlot>
              <ToolLabel $ml={10} $w={76} $off>
                Ink to Text
              </ToolLabel>
              <ToolSlot $ml={28} $w={24}>
                <RulerIcon />
              </ToolSlot>
              <ToolLabel $ml={11} $w={38}>
                Ruler
              </ToolLabel>
            </ToolRow>

            <NoteBody>
              <SideRail>
                <BooksIcon />
                <LensIcon size={23} color="#555" />
                <Clock size={27} strokeWidth={1} />
              </SideRail>
              <Canvas>
                <Highlight $x={154} $y={48} $w={143} $h={33} $size={25}>
                  EXAMPLES :
                </Highlight>
                <Highlight $x={93} $y={141} $w={23} $h={34} $size={26}>
                  1)
                </Highlight>
                <TableBox $x={190} $y={111} $w={105} $h={91} />
                <TableBox $x={407} $y={109} $w={104} $h={90} />
                <TableName $cx={239} $cy={154}>EMP</TableName>
                <TableName $cx={459} $cy={154}>DEPT</TableName>
                <Highlight $x={216} $y={233} $w={290} $h={30}>
                  EMP.DEPTNO=DEPT.DEPTNO
                </Highlight>

                <Highlight $x={93} $y={357} $w={23} $h={33} $size={26}>
                  2)
                </Highlight>
                <TableBox $x={192} $y={325} $w={104} $h={88} />
                <TableBox $x={406} $y={319} $w={104} $h={90} />
                <TableName $cx={259} $cy={370}>E1</TableName>
                <TableName $cx={444} $cy={370}>E2</TableName>
                <Highlight $x={247} $y={415} $w={201} $h={29}>
                  E1.MGR=E2.EMPNO
                </Highlight>

                <Highlight $x={93} $y={511} $w={23} $h={33} $size={26}>
                  3)
                </Highlight>
                <TableBox $x={227} $y={507} $w={104} $h={90} />
                <TableBox $x={439} $y={504} $w={103} $h={89} />
                <TableBox $x={648} $y={513} $w={104} $h={91} />
                <TableName $cx={259} $cy={555}>E1</TableName>
                <TableName $cx={475} $cy={555}>E2</TableName>
                <TableName $cx={691} $cy={555}>E3</TableName>
                <Highlight $x={247} $y={604} $w={201} $h={29}>
                  E1.MGR=E2.EMPNO
                </Highlight>
                <Highlight $x={497} $y={604} $w={200} $h={29}>
                  E2.MGR=E3.EMPNO
                </Highlight>
                <Highlight $x={278} $y={697} $w={200} $h={28}>
                  E1.MGR=E2.EMPNO
                </Highlight>

                <DrawingLayer width="1584" height="740" viewBox="0 0 1584 740">
                  <RedStroke d="M312 149H395M321 140 309 149 321 159M385 140 397 149 385 159" />
                  <RedStroke d="M312 364H395M321 355 309 364 321 374M385 355 397 364 385 374" />
                  <RedStroke d="M342 550H426M350 541 340 550 350 560M418 541 428 550 418 560" />
                  <RedStroke d="M385 550V595M376 585 385 597 394 585" />
                  <RedStroke d="M558 549H642M566 540 556 549 566 559M634 540 644 549 634 559" />
                  <RedStroke d="M597 546V590M588 580 597 592 606 580" />
                  <RedStroke d="M193 745V703H244M232 693 246 703 232 713M184 730 193 742 202 730" />
                  <RedStroke d="M493 703H653V745M504 693 491 703 504 713M644 733 653 745 662 733" />
                  <path
                    d="M634 58C700 56 780 50 843 50C900 50 950 53 1004 53C1060 54 1110 56 1147 53C1190 50 1200 46 1233 45C1280 44 1330 42 1371 40"
                    fill="none"
                    stroke={RED_INK}
                    strokeWidth="2.500"
                    strokeLinecap="round"
                  />
                </DrawingLayer>

                <EraserCursor width="33" height="25" viewBox="0 0 28 26" preserveAspectRatio="none" fill="#fff" stroke="#777" strokeWidth="1">
                  <path d="M5 8 14 6 27 17V24H17z" />
                  <path d="M17 24 14 17h13M14 17 5 8" fill="none" />
                  <path d="M0 4 6 8M6 0 6 8M2 9 6 8M10 2 6 8" stroke="#aaa" fill="none" />
                </EraserCursor>

                <InkWord $x={616} $y={7} $ink={RED_INK} $size={50} $track={10}>To</InkWord>
                <InkWord $x={728} $y={3} $ink={RED_INK} $size={50} $track={4}>Join</InkWord>
                <InkWord $x={871} $y={1} $ink={RED_INK} $size={50} $track={1}>more</InkWord>
                <InkWord $x={998} $y={0} $ink={RED_INK} $size={50} $track={8}>than</InkWord>
                <InkWord $x={1142} $y={0} $ink={RED_INK} $size={50} $track={6}>two</InkWord>
                <InkWord $x={1265} $y={0} $ink={RED_INK} $size={50} $track={1}>tables</InkWord>
                <InkWord $x={1406} $y={3} $ink={RED_INK} $size={40}>:-&gt;</InkWord>

                <InkWord $x={775} $y={120} $ink="#111" $size={22}>1</InkWord>
                <InkWord $x={786} $y={80} $ink="#111" $size={80}>)</InkWord>
                <InkWord $x={829} $y={94} $ink="#111" $size={48} $track={4}>Join</InkWord>
                <InkWord $x={956} $y={94} $ink="#111" $size={48} $track={2}>condition</InkWord>
                <InkWord $x={1170} $y={94} $ink="#111" $size={48}>,</InkWord>

                <VScrollbar />
                <HScrollbar />
              </Canvas>
            </NoteBody>

            <InnerTaskbar>
              <WinSlot>
                <WinTenIcon />
              </WinSlot>
              <SearchBox>
                <LensIcon size={21} color="#333" />
                Type here to search
              </SearchBox>
              <BarSlot $w={62}>
                <CortanaIcon />
              </BarSlot>
              <BarSlot $w={65}>
                <TimelineIcon />
              </BarSlot>
              <BarSlot $w={64.4} $active>
                <EdgeIcon size={32} />
              </BarSlot>
              <BarSlot $w={64.4}>
                <FolderIcon />
              </BarSlot>
              <BarSlot $w={64.4}>
                <NotepadIcon />
              </BarSlot>
              <BarSlot $w={64.4} $active>
                <WordpadIcon />
              </BarSlot>
              <BarSlot $w={64.4} $active>
                <OneNoteIcon />
              </BarSlot>
              <BarSlot $w={64.4} $active>
                <FlowerLogo size={34} halo="#fff" core="#2d76b5" rim="#cfe3f2" />
              </BarSlot>
              <BarGlyph $ml={37}>
                <WeatherIcon />
              </BarGlyph>
              <BarGlyph $ml={14} $fs={17}>
                18°C
              </BarGlyph>
              <BarGlyph $ml={24}>
                <ChevronUp size={22} strokeWidth={1.3} />
              </BarGlyph>
              <BarGlyph $ml={24}>
                <MeetIcon />
              </BarGlyph>
              <BarGlyph $ml={22}>
                <CloudIcon />
              </BarGlyph>
              <BarGlyph $ml={23}>
                <MicPill />
              </BarGlyph>
              <BarGlyph $ml={25}>
                <BatteryIcon color="#f0f0f0" level={13} />
              </BarGlyph>
              <BarGlyph $ml={22}>
                <Wifi size={20} strokeWidth={1.1} color="#bbb" />
              </BarGlyph>
              <BarGlyph $ml={20}>
                <Volume1 size={20} strokeWidth={1.1} color="#ccc" />
              </BarGlyph>
              <BarGlyph $ml={20}>ENG</BarGlyph>
              <BarClock>
                <span>08:17</span>
                <span>05-01-2022</span>
              </BarClock>
              <NotifyWrap>
                <ChatBubble />
                <NotifyBadge>16</NotifyBadge>
              </NotifyWrap>
              <BarDivider />
            </InnerTaskbar>
          </NoteWindow>
        </Stage>
      </ShareFrame>

      <DesktopBar>
        <DockSlot><WinElevenIcon /></DockSlot>
        <DockSlot><GlassIcon /></DockSlot>
        <DockSlot><TaskViewIcon /></DockSlot>
        <DockSlot><WidgetsIcon /></DockSlot>
        <DockSlot><ChatIcon /></DockSlot>
        <DockSlot><StoreIcon /></DockSlot>
        <DockSlot><PhoneIcon /></DockSlot>
        <DockSlot><TubeIcon /></DockSlot>
        <DockSlot><MailIcon /></DockSlot>
        <DockSlot><ChromeIcon /></DockSlot>
        <DockSlot><EdgeIcon size={30} /></DockSlot>
        <DockSlot><MonitorIcon /></DockSlot>
        <DockSlot><GitDiamondsIcon /></DockSlot>
        <DockSlot><SublimeIcon /></DockSlot>
        <DockSlot><CrossIcon /></DockSlot>
        <DockSlot><CodeIcon /></DockSlot>
        <DockSlot $dot><ProfileChromeIcon /></DockSlot>
        <DockSlot $dot><FlowerLogo size={31} core="#3f93d6" rim="#cfe3f2" /></DockSlot>
        <TraySlot $w={30} $ml={71}>
          <ChevronUp size={22} strokeWidth={1.5} />
        </TraySlot>
        <TraySlot $w={30}>
          <CloudOffIcon />
        </TraySlot>
        <TraySlot $w={36}>
          <BlueMicIcon />
        </TraySlot>
        <TraySlot $w={64}>
          <span>ENG</span>
          <span>IN</span>
        </TraySlot>
        <TraySlot $w={30}>
          <Wifi size={21} strokeWidth={1.6} />
        </TraySlot>
        <TraySlot $w={30}>
          <Volume1 size={21} strokeWidth={1.3} />
        </TraySlot>
        <TraySlot $w={30}>
          <BatteryIcon color="#111" level={6} />
        </TraySlot>
        <TrayClock>
          <div>08:17</div>
          <div>05-01-2022</div>
        </TrayClock>
        <TraySlot $w={16} $ml={13}>
          <MoonIcon />
        </TraySlot>
      </DesktopBar>

      <FloatBar>
        <Grip />
        <ExitButton>
          <ArrowLeft size={15} strokeWidth={3} />
        </ExitButton>
        <FloatSep $mt={8} />
        <RoundButton $bg="#f0431f" $ink="#fff" $mt={6}>
          <MicOff size={19} strokeWidth={1.6} />
        </RoundButton>
        <FloatSep $mt={7} />
        <RoundButton $bg="#fff" $ink="#2f3a4a" $mt={7}>
          <svg width="18" height="18" viewBox="0 0 18 18" fill="none" stroke="currentColor" strokeWidth="1.500">
            <rect x="1" y="1" width="16" height="16" rx="1.500" />
            <path d="M1 5h16" />
          </svg>
        </RoundButton>
        <FloatSep $mt={7} />
        <RoundButton $bg="#fff" $ink="#2f3a4a" $mt={6}>
          <Hand size={19} strokeWidth={1.3} />
          <RaiseArrow width="9" height="13" viewBox="0 0 9 13" fill="#0f9d58">
            <path d="M4.500 0 9 5H6v8H3V5H0z" />
          </RaiseArrow>
        </RoundButton>
        <Grip $end />
      </FloatBar>
    </Page>
  );
}
